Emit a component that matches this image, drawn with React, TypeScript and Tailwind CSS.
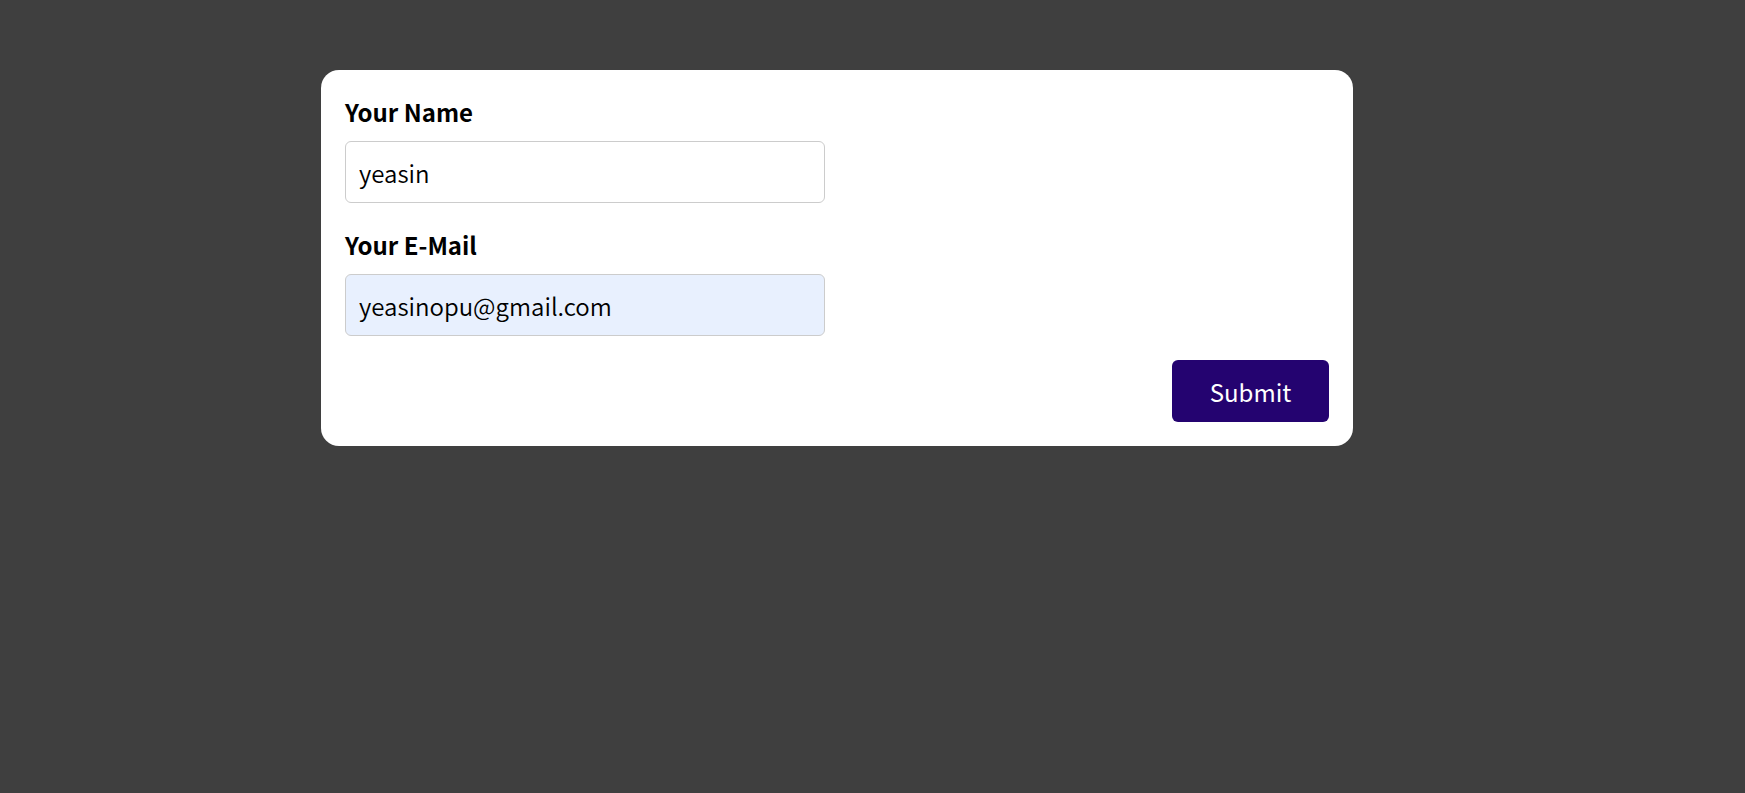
import { useState } from "react";
import type { ChangeEvent, FormEvent } from "react";

type FieldProps = {
  id: string;
  label: string;
  type: "text" | "email";
  value: string;
  filled?: boolean;
  onChange: (value: string) => void;
};

function Field({ id, label, type, value, filled = false, onChange }: FieldProps) {
  return (
    <div className="flex flex-col gap-3">
      <label htmlFor={id} className="text-2xl leading-[35px] font-bold">
        {label}
      </label>
      <input
        id={id}
        name={id}
        type={type}
        value={value}
        onChange={(event: ChangeEvent<HTMLInputElement>) => onChange(event.target.value)}
        className={`h-[62px] w-full max-w-[480px] rounded-md border border-[#cccccc] px-[13px] text-2xl font-[350] outline-none focus:border-[#240370] ${
          filled ? "bg-[#e8f0fe]" : "bg-white"
        }`}
      />
    </div>
  );
}

export default function App() {
  const [name, setName] = useState("yeasin");
  const [email, setEmail] = useState("yeasinopu@gmail.com");

  return (
    <div className="min-h-screen bg-[#3f3f3f] pt-[70px] pr-[71px] font-['Noto_Sans_CJK_JP',sans-serif] text-black">
      <form
        onSubmit={(event: FormEvent) => event.preventDefault()}
        className="mx-auto flex w-full max-w-[1032px] flex-col gap-6 rounded-[18px] bg-white p-6"
      >
        <Field id="name" label="Your Name" type="text" value={name} onChange={setName} />
        <Field id="email" label="Your E-Mail" type="email" value={email} filled onChange={setEmail} />
        <button
          type="submit"
          className="h-[62px] w-[157px] cursor-pointer self-end rounded-md bg-[#240370] pt-0.5 text-2xl text-white"
        >
          Submit
        </button>
      </form>
    </div>
  );
}
